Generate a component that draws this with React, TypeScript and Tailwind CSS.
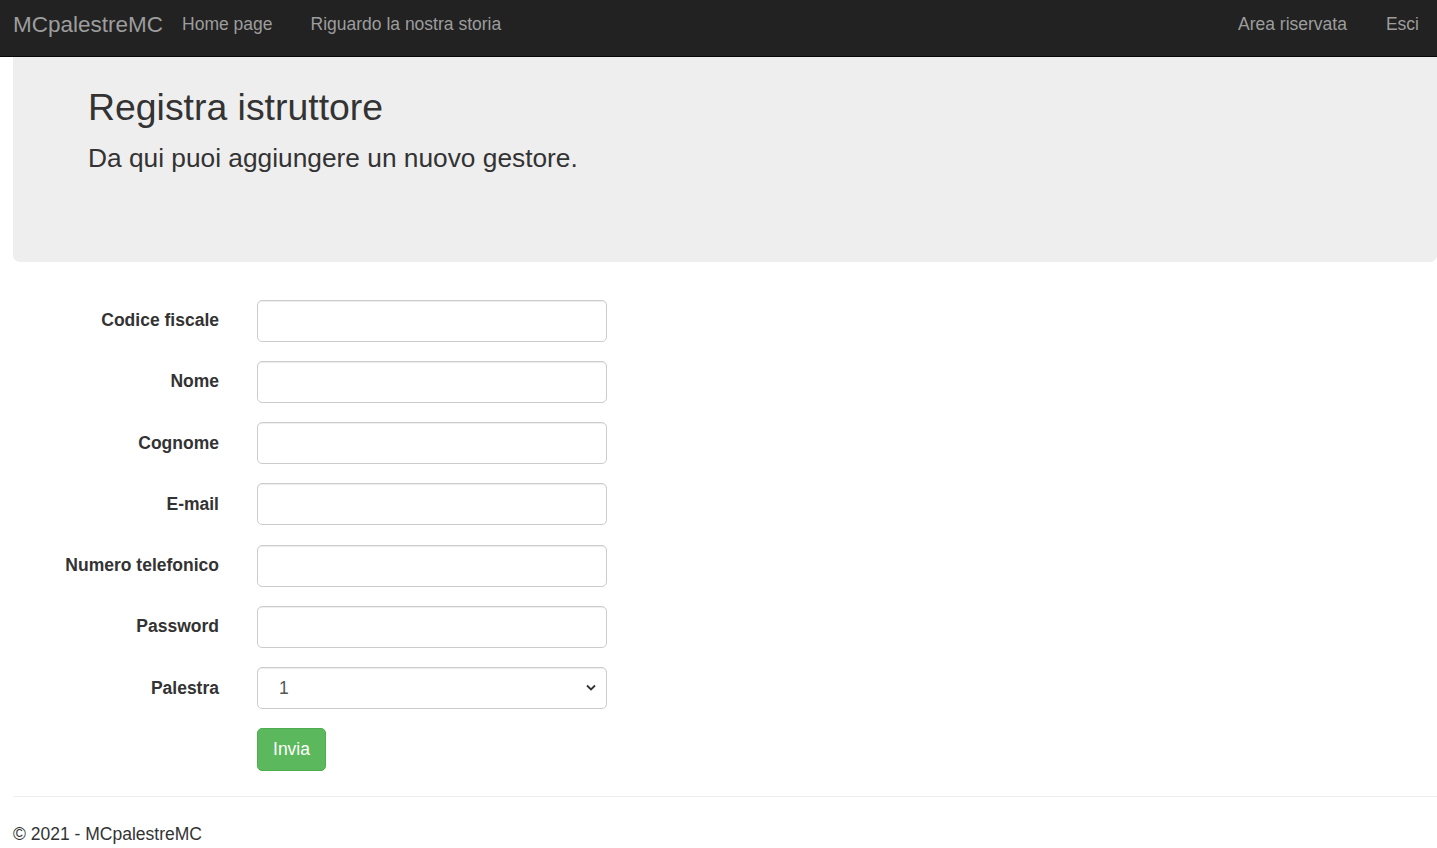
import React from 'react'

const fields = [
  { label: 'Codice fiscale', type: 'text' },
  { label: 'Nome', type: 'text' },
  { label: 'Cognome', type: 'text' },
  { label: 'E-mail', type: 'email' },
  { label: 'Numero telefonico', type: 'tel' },
  { label: 'Password', type: 'password' },
]

function NavLink({ children }: { children: React.ReactNode }) {
  return (
    <a href="#" className="block px-[19px] pt-[12px] text-[17.5px] leading-[25px] text-[#9d9d9d] hover:text-white">
      {children}
    </a>
  )
}

export default function App() {
  return (
    <div className="min-h-screen bg-white font-['Liberation_Sans',Arial,sans-serif] text-[#333]">
      {/* Navbar */}
      <nav className="flex h-[57px] items-start justify-between border-b border-[#080808] bg-[#222]">
        <div className="flex">
          <a href="#" className="block pl-[13px] pt-[12px] text-[22.5px] leading-[25px] text-[#9d9d9d]">
            MCpalestreMC
          </a>
          <NavLink>Home page</NavLink>
          <NavLink>Riguardo la nostra storia</NavLink>
        </div>
        <div className="flex pr-[1px]">
          <NavLink>Area riservata</NavLink>
          <a href="#" className="block pl-[20px] pr-[17px] pt-[12px] text-[17.5px] leading-[25px] text-[#9d9d9d]">
            Esci
          </a>
        </div>
      </nav>

      {/* Jumbotron */}
      <div className="ml-[13px] rounded-b-[7px] bg-[#eee] pb-[86px] pl-[75px] pt-[30px]">
        <h1 className="text-[37.4px] font-normal leading-[40.5px] text-[#333]">Registra istruttore</h1>
        <p className="mt-[12px] text-[26.3px] leading-[36px]">Da qui puoi aggiungere un nuovo gestore.</p>
      </div>

      {/* Form */}
      <form className="pl-[13px] pt-[38px]" onSubmit={(e) => e.preventDefault()}>
        {fields.map((f) => (
          <div key={f.label} className="mb-[19.25px] flex h-[42px] items-center">
            <label className="w-[225px] pr-[19px] text-right text-[17.5px] font-bold leading-[25px]">
              {f.label}
            </label>
            <div className="pl-[19px]">
              <input
                type={f.type}
                className="h-[42px] w-[350px] rounded-[5px] border border-[#ccc] bg-white px-[15px] text-[17.5px] text-[#555] shadow-[inset_0_1px_1px_rgba(0,0,0,0.075)] outline-none"
              />
            </div>
          </div>
        ))}
        <div className="mb-[19.25px] flex h-[42px] items-center">
          <label className="w-[225px] pr-[19px] text-right text-[17.5px] font-bold leading-[25px]">Palestra</label>
          <div className="relative pl-[19px]">
            <select className="h-[42px] w-[350px] appearance-none rounded-[5px] border border-[#ccc] bg-white pl-[21px] pr-[30px] text-[17.5px] text-[#555] shadow-[inset_0_1px_1px_rgba(0,0,0,0.075)] outline-none">
              <option>1</option>
              <option>2</option>
              <option>3</option>
            </select>
            <svg
              className="pointer-events-none absolute right-[11px] top-[17px]"
              width="10"
              height="7"
              viewBox="0 0 10 7"
              fill="none"
            >
              <path d="M1 1.5 L5 5.5 L9 1.5" stroke="#333" strokeWidth="1.8" />
            </svg>
          </div>
        </div>
        <div className="pl-[244px]">
          <button
            type="submit"
            className="h-[43px] w-[69px] rounded-[5px] border border-[#4cae4c] bg-[#5cb85c] text-[17.5px] leading-[25px] text-white"
          >
            Invia
          </button>
        </div>
      </form>

      {/* Footer */}
      <hr className="ml-[13px] mt-[25px] border-t border-[#eee]" />
      <footer className="pl-[13px] pt-[25px]">
        <p className="text-[17.5px] leading-[25px]">© 2021 - MCpalestreMC</p>
      </footer>
    </div>
  )
}
